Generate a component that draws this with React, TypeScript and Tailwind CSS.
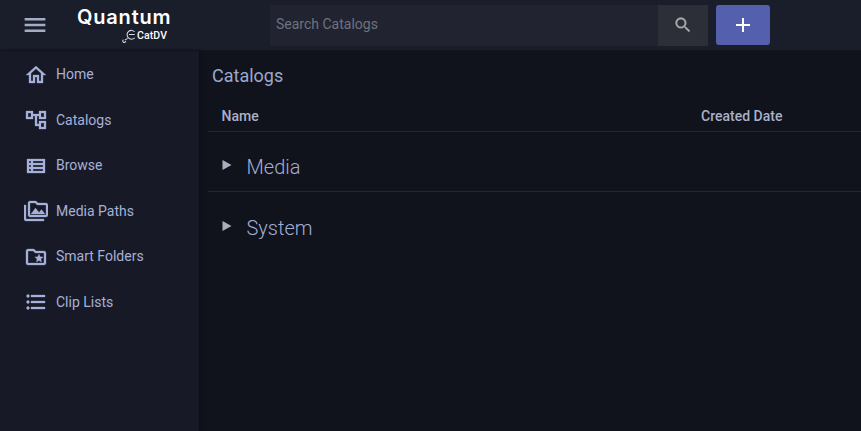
const Icon = ({ d, className, sw }: { d: string; className: string; sw?: string }) => (
  <svg viewBox="0 0 24 24" fill="currentColor" stroke="currentColor" strokeWidth={sw ?? "0"} className={className}>
    <path d={d} />
  </svg>
);

const items = [
  { label: "Home", d: "M12 5.69l5 4.5V18h-2v-6H9v6H7v-7.81l5-4.5M12 3L2 12h3v8h6v-6h2v6h6v-8h3L12 3z" },
  { label: "Catalogs", d: "M22 11V3h-7v3H9V3H2v8h7V8h2v10h4v3h7v-8h-7v3h-2V8h2v3h7zM7 9H4V5h3v4zm10 6h3v4h-3v-4zm0-10h3v4h-3V5z" },
  { label: "Browse", d: "M3 5v14h18V5H3zm4 2v2H5V7h2zm-2 6v-2h2v2H5zm0 2h2v2H5v-2zm14 2H9v-2h10v2zm0-4H9v-2h10v2zm0-4H9V7h10v2z" },
  { label: "Media Paths", d: "M2 6H0v5h.01L0 20c0 1.1.9 2 2 2h18v-2H2V6zm5 9h14l-3.5-4.5-2.5 3.01L11.5 9zM22 4h-8l-2-2H6c-1.1 0-1.99.9-1.99 2L4 16c0 1.1.9 2 2 2h16c1.1 0 2-.9 2-2V6c0-1.1-.9-2-2-2zm0 12H6V4h5.17l1.41 1.41.59.59H22v10z" },
  { label: "Smart Folders", d: "M20 6h-8l-2-2H4c-1.1 0-1.99.9-1.99 2L2 18c0 1.1.9 2 2 2h16c1.1 0 2-.9 2-2V8c0-1.1-.9-2-2-2zm0 12H4V6h5.17l2 2H20v10zm-6.92-3.96L12.39 17 15 15.47 17.61 17l-.69-2.96 2.3-1.99-3.03-.26L15 9l-1.19 2.79-3.03.26z" },
  { label: "Clip Lists", d: "M4 10.5c-.83 0-1.5.67-1.5 1.5s.67 1.5 1.5 1.5 1.5-.67 1.5-1.5-.67-1.5-1.5-1.5zm0-6c-.83 0-1.5.67-1.5 1.5S3.17 7.5 4 7.5 5.5 6.83 5.5 6 4.83 4.5 4 4.5zm0 12c-.83 0-1.5.68-1.5 1.5s.68 1.5 1.5 1.5 1.5-.68 1.5-1.5-.67-1.5-1.5-1.5zM7 19h14v-2H7v2zm0-6h14v-2H7v2zm0-8v2h14V5H7z" },
];

const Row = ({ name, className }: { name: string; className: string }) => (
  <div className={`flex items-center pl-[14px] ${className}`}>
    <svg viewBox="0 0 10 10" className="w-[10px] h-[10px] mb-[5px]" fill="#a9aebd">
      <path d="M0.5 0 L9.5 5 L0.5 10 Z" />
    </svg>
    <span className="ml-[14.5px] text-[20px] font-light text-[#a3add4]">{name}</span>
  </div>
);

export default function App() {
  return (
    <div className="w-[861px] h-[431px] overflow-hidden flex flex-col bg-[#10131c] font-['Roboto',sans-serif]">
      <header className="h-[51px] shrink-0 flex items-center bg-[#1a1d2a] border-b border-[#12141d]">
        <div className="w-[70px] pl-[23px] shrink-0 text-[#a5adc6]">
          <Icon d="M3 18h18v-2H3v2zm0-5h18v-2H3v2zm0-7v2h18V6H3z" className="w-6 h-6 scale-[1.15]" />
        </div>
        <div className="w-[200px] h-[36px] shrink-0 flex flex-col pl-[7px]">
          <span className="text-[20px] leading-[21px] font-semibold text-white font-['Inter',sans-serif] tracking-[0.8px]">Quantum</span>
          <div className="flex items-center pl-[45px] text-white">
            <svg viewBox="0 0 16 16" className="w-[15px] h-[15px]" fill="none" stroke="#d8dbe4" strokeWidth="1.1">
              <path d="M13.5 4A4.7 4.7 0 1 0 13.5 10.5M7.5 7h6M6 11 L3 13M1.5 12.5a1.6 1.6 0 1 0 2.5 1.5" />
            </svg>
            <span className="text-[10.5px] leading-[13px] font-medium tracking-[0.1px]">CatDV</span>
          </div>
        </div>
        <div className="w-[388px] h-[41px] shrink-0 flex items-center bg-[#212430] pl-[6px] pb-[2px] text-[14px] text-[#6d7280]">
          Search Catalogs
        </div>
        <div className="w-[50px] h-[41px] shrink-0 flex items-center justify-center bg-[#2d2f38] text-[#a8a9ae]">
          <Icon className="w-5 h-5" sw="0.3" d="M15.5 14h-.79l-.28-.27C15.41 12.59 16 11.11 16 9.5 16 5.91 13.09 3 9.5 3S3 5.91 3 9.5 5.91 16 9.5 16c1.61 0 3.09-.59 4.23-1.57l.27.28v.79l5 4.99L20.49 19l-4.99-5zm-6 0C7.01 14 5 11.99 5 9.5S7.01 5 9.5 5 14 7.01 14 9.5 11.99 14 9.5 14z" />
        </div>
        <div className="ml-2 w-[54px] h-10 shrink-0 flex items-center justify-center rounded-[3px] bg-[#545fad] text-white">
          <Icon className="w-6 h-6" d="M19 13h-6v6h-2v-6H5v-2h6V5h2v6h6v2z" />
        </div>
      </header>
      <div className="flex flex-1 min-h-0">
        <nav className="w-[199px] shrink-0 bg-[#171a26] pt-[1px] shadow-[1px_0_4px_rgba(0,0,0,0.35)]">
          {items.map((it) => (
            <div key={it.label} className="h-[45.5px] flex items-center pl-[24px] text-[#a7b0d8] text-[14px]">
              <Icon d={it.d} sw="0.3" className="w-6 h-6" />
              <span className="ml-[8px]">{it.label}</span>
            </div>
          ))}
        </nav>
        <main className="flex-1 pl-[9px] min-w-0">
          <h1 className="pl-[4px] pt-[14px] h-[46px] text-[18px] leading-[22px] font-normal text-[#9ba8d0]">Catalogs</h1>
          <div className="h-[35px] flex items-center justify-between border-b border-[#23263a] pl-[13.5px] pt-[4px] text-[14px] font-medium text-[#a9b1c8]">
            <span>Name</span>
            <span className="w-[160px]">Created Date</span>
          </div>
          <Row name="Media" className="h-[60px] pt-[11px] border-b border-[#23263a]" />
          <Row name="System" className="h-[72px]" />
        </main>
      </div>
    </div>
  );
}
